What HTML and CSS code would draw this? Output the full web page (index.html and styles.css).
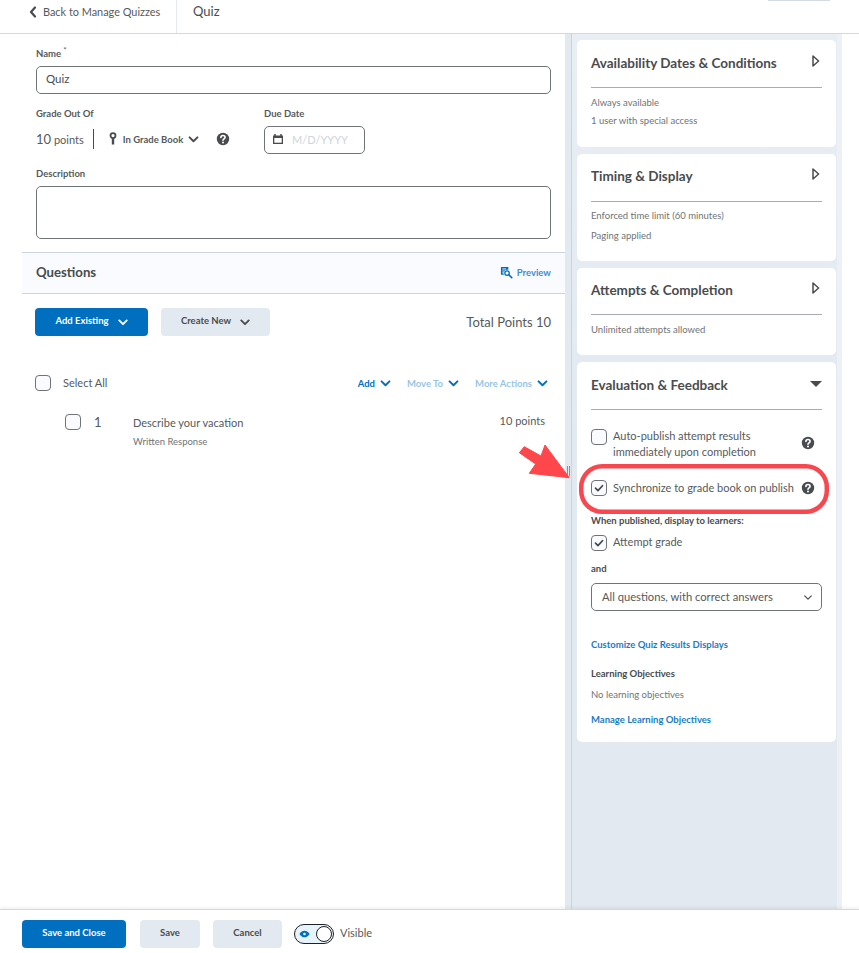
FILE: index.html
```html
<!DOCTYPE html>
<html lang="en">
<head>
<meta charset="utf-8">
<title>Quiz</title>
<link rel="stylesheet" href="styles.css">
</head>
<body>
<svg class="defs" aria-hidden="true">
  <symbol id="chev" viewBox="0 0 12 8"><path d="M1.5 1.5 6 6l4.5-4.500" fill="none" stroke="currentColor" stroke-width="2.2" stroke-linecap="round" stroke-linejoin="round"/></symbol>
  <symbol id="help" viewBox="0 0 14 14"><circle cx="7" cy="7" r="6.2" fill="#494c4e"/><path d="M4.9 5.4c0-1.2 1-1.900 2.100-1.900s2.100.7 2.100 1.800c0 1.600-2.100 1.600-2.100 3" fill="none" stroke="#fff" stroke-width="1.6" stroke-linecap="round"/><circle cx="7" cy="10.4" r="1" fill="#fff"/></symbol>
  <symbol id="tri" viewBox="0 0 8 12"><path d="M1 1l5.600 5L1 11z" fill="#fff" stroke="#494c4e" stroke-width="1.500" stroke-linejoin="round"/></symbol>
  <symbol id="check" viewBox="0 0 16 16"><path d="M4 8.200l2.800 2.800L12 5.400" fill="none" stroke="#494c4e" stroke-width="2" stroke-linecap="round" stroke-linejoin="round"/></symbol>
</svg>
<div class="sliver"></div>
<header class="topbar">
  <a class="back"><svg class="back-icon" viewBox="0 0 8 12"><path d="M6 1.500 2 6l4 4.500" fill="none" stroke="#494c4e" stroke-width="2.200" stroke-linecap="round" stroke-linejoin="round"/></svg>Back to Manage Quizzes</a>
  <h1 class="page-title">Quiz</h1>
</header>
<div class="content">
  <main class="editor">
    <div class="form">
      <div class="label">Name <sup class="req">*</sup></div>
      <div class="input name-input">Quiz</div>
      <div class="grade-row">
        <div class="grade-col">
          <div class="label">Grade Out Of</div>
          <div class="grade-line">
            <span class="points"><b class="points-num">10</b> points</span>
            <span class="in-book">
              <svg class="key" viewBox="0 0 8 14"><circle cx="4" cy="3.600" r="2.500" fill="none" stroke="#494c4e" stroke-width="1.800"/><path d="M4 6v6.500" stroke="#494c4e" stroke-width="2.400"/></svg>
              In Grade Book
              <svg class="chev-sm dark"><use href="#chev"/></svg>
            </span>
            <svg class="help grade-help"><use href="#help"/></svg>
          </div>
        </div>
        <div class="due-col">
          <div class="label">Due Date</div>
          <div class="input date-input">
            <svg class="cal" viewBox="0 0 12 12"><path d="M1 2.500h10V11H1z" fill="#494c4e"/><path d="M3 1v2M9 1v2" stroke="#494c4e" stroke-width="1.500"/><path d="M2.300 5h7.400v4.700H2.300z" fill="#fff"/></svg>
            <span class="placeholder">M/D/YYYY</span>
          </div>
        </div>
      </div>
      <div class="label desc-label">Description</div>
      <div class="input textarea"></div>
    </div>
    <section class="questions">
      <div class="q-band">
        <h2 class="q-title">Questions</h2>
        <a class="preview">
          <svg class="preview-icon" viewBox="0 0 14 14"><path d="M1 1h8v3H7.200a3.600 3.600 0 0 0-3 5.500H1z" fill="#006fbf"/><path d="M2.500 3.200h4M2.500 5.400h1.600M2.500 7.400h1.400" stroke="#fff" stroke-width="1"/><circle cx="7.600" cy="7.600" r="2.400" fill="none" stroke="#006fbf" stroke-width="1.400"/><path d="M9.400 9.400 12.600 12.600" stroke="#006fbf" stroke-width="1.800" stroke-linecap="round"/></svg>
          Preview
        </a>
      </div>
      <div class="q-body">
        <div class="q-actions">
          <button class="btn primary add-existing">Add Existing <svg class="chev-btn"><use href="#chev"/></svg></button>
          <button class="btn secondary create-new">Create New <svg class="chev-btn"><use href="#chev"/></svg></button>
          <span class="total">Total Points 10</span>
        </div>
        <div class="select-row">
          <span class="box"></span>
          <span class="select-all">Select All</span>
          <span class="tools">
            <a class="tool">Add <svg class="chev-sm"><use href="#chev"/></svg></a>
            <a class="tool off">Move To <svg class="chev-sm"><use href="#chev"/></svg></a>
            <a class="tool off">More Actions <svg class="chev-sm"><use href="#chev"/></svg></a>
          </span>
        </div>
        <div class="q-item">
          <span class="box"></span>
          <span class="q-num">1</span>
          <div class="q-text">
            <div class="q-name">Describe your vacation</div>
            <div class="q-type">Written Response</div>
          </div>
          <span class="q-points">10 points</span>
        </div>
      </div>
    </section>
  </main>
  <div class="gutter"><span class="handle"></span></div>
  <aside class="sidebar">
    <section class="card c1">
      <div class="card-head"><h3 class="card-title">Availability Dates &amp; Conditions</h3><svg class="tri"><use href="#tri"/></svg></div>
      <p class="summary">Always available</p>
      <p class="summary">1 user with special access</p>
    </section>
    <section class="card c2">
      <div class="card-head"><h3 class="card-title">Timing &amp; Display</h3><svg class="tri"><use href="#tri"/></svg></div>
      <p class="summary">Enforced time limit (60 minutes)</p>
      <p class="summary">Paging applied</p>
    </section>
    <section class="card c3">
      <div class="card-head"><h3 class="card-title">Attempts &amp; Completion</h3><svg class="tri"><use href="#tri"/></svg></div>
      <p class="summary">Unlimited attempts allowed</p>
    </section>
    <section class="card c4">
      <div class="card-head"><h3 class="card-title">Evaluation &amp; Feedback</h3><span class="tri-down"></span></div>
      <div class="opt auto">
        <span class="box"></span>
        <span class="opt-text">Auto-publish attempt results<br>immediately upon completion</span>
        <svg class="help"><use href="#help"/></svg>
      </div>
      <div class="opt sync">
        <span class="box"><svg class="check"><use href="#check"/></svg></span>
        <span class="opt-text">Synchronize to grade book on publish</span>
        <svg class="help"><use href="#help"/></svg>
      </div>
      <div class="sub-label when">When published, display to learners:</div>
      <div class="opt attempt">
        <span class="box"><svg class="check"><use href="#check"/></svg></span>
        <span class="opt-text">Attempt grade</span>
      </div>
      <div class="sub-label and">and</div>
      <div class="input select">All questions, with correct answers
        <svg class="select-chev" viewBox="0 0 12 8"><path d="M2 2l4 4 4-4" fill="none" stroke="#494c4e" stroke-width="1.400" stroke-linecap="round" stroke-linejoin="round"/></svg>
      </div>
      <a class="link customize">Customize Quiz Results Displays</a>
      <div class="sub-label objectives">Learning Objectives</div>
      <p class="summary none">No learning objectives</p>
      <a class="link manage">Manage Learning Objectives</a>
    </section>
  </aside>
  <div class="side-edge"></div>
</div>
<footer class="footer">
  <button class="btn primary save-close">Save and Close</button>
  <button class="btn secondary save">Save</button>
  <button class="btn secondary cancel">Cancel</button>
  <span class="toggle">
    <span class="toggle-track">
      <svg class="eye" viewBox="0 0 14 10"><path d="M0.500 5C2.500 1.800 4.600.8 7 .8s4.500 1 6.500 4.200C11.500 8.200 9.400 9.200 7 9.200S2.500 8.200.5 5z" fill="#006fbf"/><circle cx="7" cy="5" r="1.700" fill="#e6f3fb"/></svg>
      <span class="toggle-knob"></span>
    </span>
    Visible
  </span>
</footer>
<svg class="annotation" viewBox="0 0 859 953" aria-hidden="true">
  <path d="M519.300 452.700 524.300 446.700 541 456 545 445 569.300 477.700 529.300 473.300 535.700 464z" fill="#fd474c" stroke="#fd474c" stroke-width="1" stroke-linejoin="round"/>
  <rect x="581.200" y="466.200" width="245.600" height="45.600" rx="21" fill="none" stroke="#f8474f" stroke-width="4.500"/>
</svg>
</body>
</html>
```

FILE: styles.css
```css
* { box-sizing: border-box; }
html, body { margin: 0; padding: 0; }
body {
  position: relative;
  width: 859px;
  height: 953px;
  overflow: hidden;
  display: flex;
  flex-direction: column;
  background: #fff;
  color: #494c4e;
  font-family: Lato, "Liberation Sans", sans-serif;
}
.defs { position: absolute; width: 0; height: 0; }
.sliver { position: absolute; left: 768px; top: 0; width: 62px; height: 1px; background: #d5dce5; }

.topbar { flex: none; height: 34px; display: flex; align-items: stretch; border-bottom: 1px solid #d3d9e3; }
.back { width: 177px; padding: 4px 0 0 29px; border-right: 1px solid #e3e9f1; font-size: 10.900px; line-height: 15px; display: flex; align-items: flex-start; color: #565a5c; }
.back-icon { width: 8px; height: 12px; margin: 2px 6px 0 0; flex: none; }
.page-title { margin: 0 0 0 16px; padding-top: 3px; font-size: 13px; line-height: 17px; font-weight: 400; color: #494c4e; }

.content { flex: 1; display: flex; min-height: 0; }
.editor { width: 565px; flex: none; padding-left: 22px; }
.form { padding: 13px 14px 0 14px; }
.label { font-size: 9.500px; line-height: 14px; font-weight: 700; color: #565a5c; }
.req { font-size: 8px; line-height: 0; font-weight: 400; }
.input { border: 1px solid #6e7477; border-radius: 5px; background: #fff; }
.name-input { margin-top: 5px; height: 28px; padding-left: 9px; font-size: 11.500px; line-height: 24px; }
.grade-row { display: flex; margin-top: 13px; }
.grade-col { width: 228px; }
.grade-line { display: flex; align-items: center; height: 28px; margin-top: 5px; padding-bottom: 2px; }
.points { font-size: 11px; padding-right: 9px; height: 20px; line-height: 20px; border-right: 1px solid #494c4e; color: #565a5c; }
.points-num { font-weight: 400; font-size: 13px; }
.in-book { display: inline-flex; align-items: center; margin-left: 15px; font-size: 9.500px; font-weight: 700; color: #565a5c; }
.key { width: 8px; height: 14px; margin-right: 6px; }
.chev-sm { width: 11px; height: 7px; margin-left: 5px; color: #006fbf; }
.chev-sm.dark { color: #494c4e; }
.help { width: 14px; height: 14px; flex: none; }
.grade-help { margin-left: 17px; }
.date-input { margin-top: 5px; width: 101px; height: 28px; display: flex; align-items: center; padding: 0 0 2px 7px; }
.cal { width: 12px; height: 12px; margin-right: 8px; }
.placeholder { font-size: 11px; color: #cdd5dc; }
.desc-label { margin-top: 13px; }
.textarea { margin-top: 5px; height: 53px; }

.questions { margin-top: 13px; }
.q-band { height: 42px; display: flex; align-items: center; justify-content: space-between; padding: 0 14px 2px; background: #f9fbff; border-top: 1px solid #cdd5dc; border-bottom: 1px solid #cdd5dc; }
.q-title { margin: 0; font-size: 13.200px; font-weight: 700; color: #494c4e; }
.preview { display: inline-flex; align-items: center; font-size: 9.500px; font-weight: 700; color: #3d8fd1; }
.preview-icon { width: 13px; height: 13px; margin-right: 4px; }
.q-body { padding: 14px 14px 0 13px; }
.q-actions { display: flex; align-items: center; }
.btn { border: 0; border-radius: 4px; height: 28px; font-family: inherit; font-size: 9.500px; font-weight: 700; padding: 0 0 3px; display: inline-flex; align-items: center; justify-content: center; }
.primary { background: #006fbf; color: #fff; }
.secondary { background: #e3e9f1; color: #494c4e; }
.chev-btn { width: 10px; height: 7px; margin: 3px 0 0 9px; }
.add-existing { width: 113px; }
.create-new { width: 109px; margin-left: 13px; }
.total { margin-left: auto; font-size: 13px; color: #565a5c; }
.select-row { display: flex; align-items: center; height: 16px; margin-top: 39px; }
.box { width: 16px; height: 16px; flex: none; display: block; border: 1px solid #6e7477; border-radius: 4px; background: #f9fbff; }
.select-all { margin: 0 0 2px 12px; font-size: 11px; color: #565a5c; }
.tools { margin-left: auto; display: flex; gap: 16px; padding-right: 3px; }
.tool { display: inline-flex; align-items: center; font-size: 9.500px; font-weight: 700; color: #006fbf; }
.tool.off { color: #99c5e5; }
.q-item { display: flex; align-items: flex-start; margin-top: 23px; padding-left: 30px; }
.q-num { width: 38px; margin-left: 13px; font-size: 13px; line-height: 16px; color: #565a5c; }
.q-text { flex: 1; margin-left: 1px; }
.q-name { font-size: 11px; line-height: 18px; color: #565a5c; }
.q-type { font-size: 9.500px; line-height: 12px; margin-top: 4px; color: #6e7477; }
.q-points { margin-right: 6px; font-size: 11px; line-height: 14px; color: #565a5c; }

.gutter { position: relative; width: 7px; flex: none; background: #e3e9f1; border-right: 1px solid #cdd5dc; }
.handle { position: absolute; left: 2px; top: 432px; width: 3px; height: 10px; border-left: 1px solid #8a8f93; border-right: 1px solid #8a8f93; }
.sidebar { width: 265px; flex: none; background: linear-gradient(#e9eef5, #e3e9f1 400px); padding: 6px 1px 0 5px; display: flex; flex-direction: column; gap: 7px; }
.side-edge { width: 5px; flex: none; background: #edf0f6; }
.card { background: #fff; border-radius: 5px; padding: 0 14px; flex: none; }
.c1 { height: 107px; }
.c2 { height: 107px; }
.c3 { height: 87px; }
.c4 { height: 380px; }
.card-head { height: 48px; display: flex; align-items: flex-start; justify-content: space-between; padding-top: 14px; border-bottom: 1px solid #a7acb0; margin-bottom: 6px; }
.c2 .card-head { padding-top: 13px; margin-bottom: 4px; }
.c2 .summary { line-height: 20px; }
.c3 .card-head { height: 47px; padding-top: 13px; margin-bottom: 6px; }
.card-title { margin: 0; font-size: 13.500px; line-height: 18px; font-weight: 700; color: #494c4e; }
.tri { width: 8px; height: 12px; margin: 1px 2px 0 0; }
.tri-down { width: 0; height: 0; margin: 5px 0 0 0; border-left: 6px solid transparent; border-right: 6px solid transparent; border-top: 6px solid #494c4e; }
.summary { margin: 0; font-size: 9.500px; line-height: 18px; color: #6e7477; }
.c4 .card-head { margin-bottom: 19px; padding-top: 14px; }
.opt { display: flex; align-items: flex-start; font-size: 11px; line-height: 16px; color: #565a5c; }
.opt .box { margin-right: 6px; }
.check { display: block; width: 14px; height: 14px; }
.opt-text { flex: 1; }
.auto .opt-text { margin-top: -1px; }
.opt .help { margin: 7px 7px 0 0; }
.auto { height: 35px; }
.sync { margin-top: 16px; height: 16px; }
.sync .opt-text { line-height: 15px; }
.sync .help { margin-top: 1px; }
.sub-label { font-size: 9.500px; line-height: 12px; font-weight: 700; color: #494c4e; }
.when { margin-top: 19px; }
.attempt { margin-top: 8px; height: 16px; }
.attempt .opt-text { line-height: 14px; }
.and { margin-top: 12px; }
.select { position: relative; height: 28px; margin-top: 8px; width: 231px; padding-left: 10px; font-size: 11.200px; line-height: 26px; color: #565a5c; }
.select-chev { position: absolute; right: 8px; top: 10px; width: 10px; height: 7px; }
.link { display: block; font-size: 9.500px; line-height: 12px; font-weight: 700; color: #1a7cc4; }
.customize { margin-top: 28px; }
.objectives { margin-top: 17px; }
.none { margin-top: 6px; }
.manage { margin-top: 10px; }

.footer { flex: none; height: 44px; display: flex; align-items: center; padding: 2px 0 0 22px; background: #fff; border-top: 1px solid #d3d9e3; box-shadow: 0 -2px 3px rgba(0,0,0,.05); position: relative; }
.footer .btn { margin-top: 2px; padding-bottom: 2px; }
.save-close { width: 104px; }
.footer .save { width: 60px; margin-left: 14px; }
.footer .cancel { width: 69px; margin-left: 13px; }
.toggle { display: inline-flex; align-items: center; margin-left: 12px; font-size: 11px; color: #565a5c; }
.toggle-track { width: 40px; height: 20px; margin: 2px 6px 0 0; border: 1.500px solid #202122; border-radius: 10px; background: #e6f3fb; display: flex; align-items: center; justify-content: space-between; padding: 0 1px 0 4px; }
.eye { width: 11px; height: 8px; }
.toggle-knob { width: 16px; height: 16px; border: 1.500px solid #202122; border-radius: 50%; background: #fff; }

.annotation { position: absolute; left: 0; top: 0; width: 859px; height: 953px; pointer-events: none; }
```
